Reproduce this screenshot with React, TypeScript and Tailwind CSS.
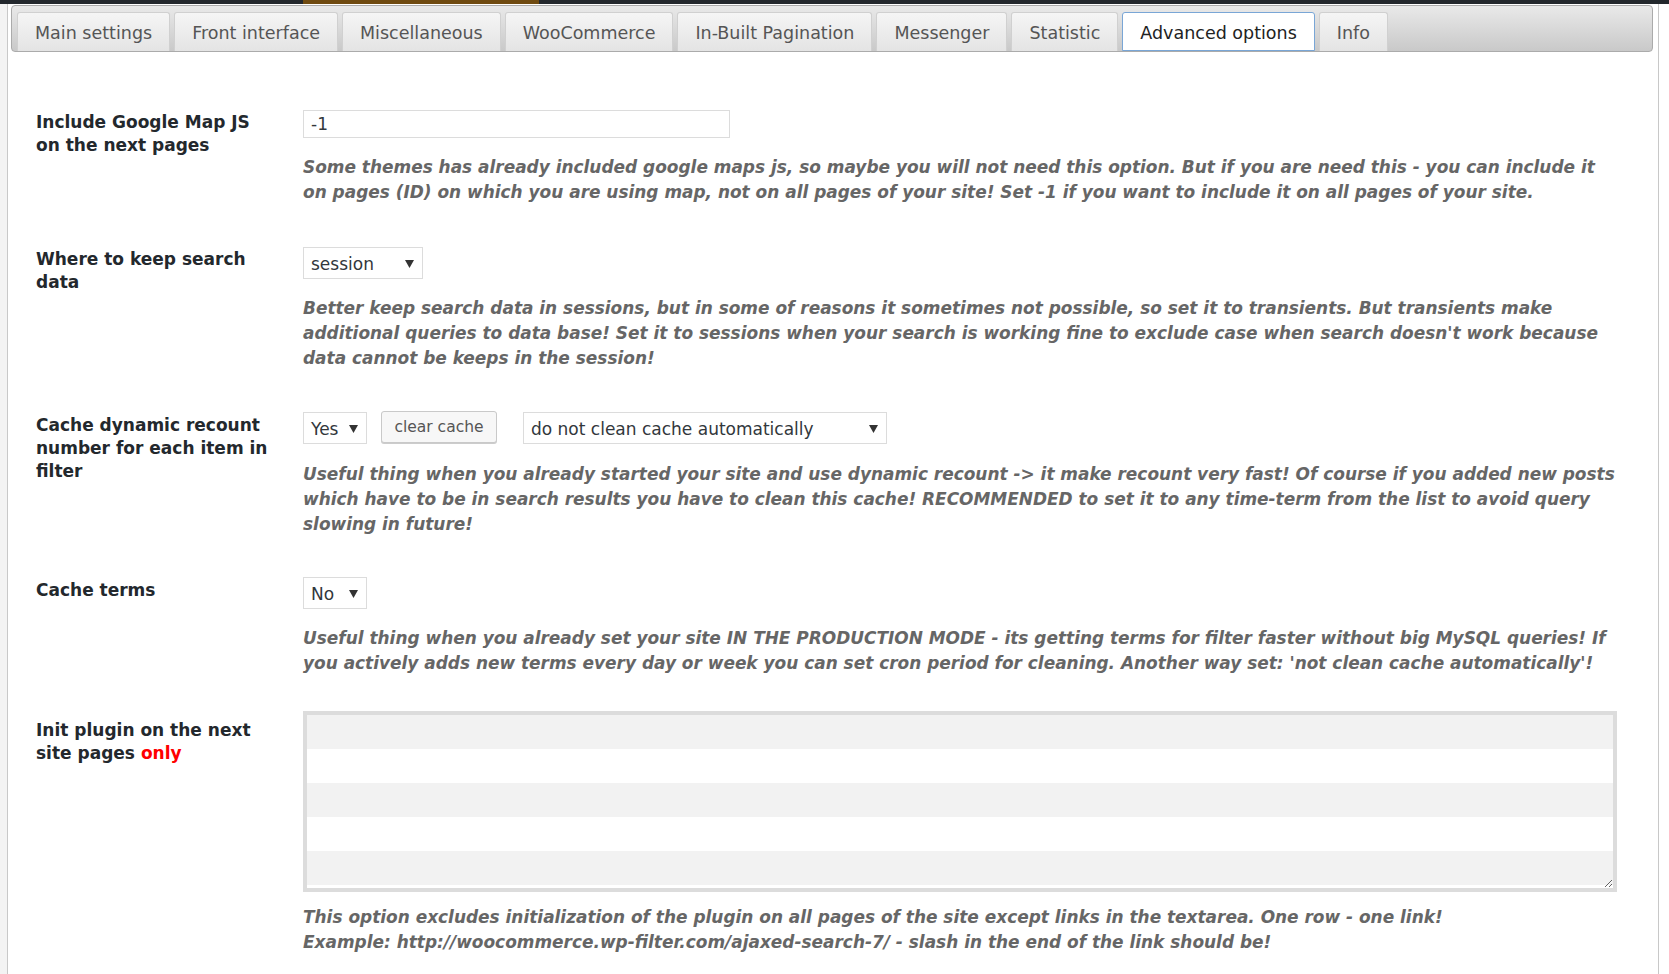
import React from "react";

const tabs = [
  "Main settings",
  "Front interface",
  "Miscellaneous",
  "WooCommerce",
  "In-Built Pagination",
  "Messenger",
  "Statistic",
  "Advanced options",
  "Info",
];

function Arrow() {
  return (
    <svg width="9" height="8" viewBox="0 0 9 8" className="shrink-0">
      <path d="M0 0 L9 0 L4.5 8 Z" fill="#333" />
    </svg>
  );
}

function FakeSelect({ value, w }: { value: string; w: string }) {
  return (
    <div
      className={`${w} h-[32px] border border-[#dcdcdc] bg-white flex items-center justify-between pl-[7px] pr-[8px] pt-[2px] text-[17px] text-[#32373c] shrink-0`}
    >
      <span className="leading-none">{value}</span>
      <Arrow />
    </div>
  );
}

function Desc({ lines, mt }: { lines: string[]; mt: string }) {
  return (
    <div className={`${mt} text-[16.95px] leading-[25px] font-bold italic text-[#666] whitespace-nowrap`}>
      {lines.map((l, i) => (
        <React.Fragment key={i}>
          {l}
          {i < lines.length - 1 && <br />}
        </React.Fragment>
      ))}
    </div>
  );
}

function Label({ children, pt = "pt-[2px]" }: { children: React.ReactNode; pt?: string }) {
  return (
    <div className={`w-[267px] shrink-0 pr-[27px] ${pt}`}>
      <div className="text-[17px] leading-[23px] font-bold text-[#23282d]">{children}</div>
    </div>
  );
}

export default function App() {
  return (
    <div className="min-h-screen bg-white font-['DejaVu_Sans',sans-serif]">
      <div className="flex h-[4px] bg-[#23282d]">
        <div className="w-[303px]" />
        <div className="w-[236px] bg-[#6f4a10]" />
      </div>
      <div className="flex min-h-[970px]">
        <div className="w-[7px] shrink-0 bg-[#f3f3f3]" />
        <div className="w-[1652px] shrink-0 border-l border-r border-[#c8c8c8] bg-white pt-px pl-[3px] pr-[5px]">
          {/* tab bar */}
          <div className="h-[47px] border border-[#ababab] rounded-[4px] bg-linear-to-b from-[#e9e9e9] to-[#c9c9c9] flex items-end pl-[5px] gap-[4px] overflow-hidden">
            {tabs.map((t) => {
              const active = t === "Advanced options";
              return (
                <div
                  key={t}
                  className={
                    active
                      ? "h-[39px] px-[17px] pt-[3px] flex items-center bg-white border border-[#79a6d6] rounded-t-[3px] text-[17.5px] text-[#222]"
                      : "h-[39px] px-[17px] pt-[3px] flex items-center border border-b-0 border-[#d0d0d0] rounded-t-[3px] bg-linear-to-b from-[#f5f5f5] to-[#e4e4e4] text-[17.5px] text-[#555]"
                  }
                >
                  {t}
                </div>
              );
            })}
          </div>

          {/* form */}
          <div className="pl-[25px] mt-[57px]">
            {/* row 1 */}
            <div className="flex">
              <Label>Include Google Map JS on the next pages</Label>
              <div className="flex-1">
                <div className="mt-px w-[427px] h-[28px] border border-[#dcdcdc] flex items-center pl-[7px] pt-[2px] text-[17px] text-[#32373c]">
                  -1
                </div>
                <Desc
                  mt="mt-[17px]"
                  lines={[
                    "Some themes has already included google maps js, so maybe you will not need this option. But if you are need this - you can include it",
                    "on pages (ID) on which you are using map, not on all pages of your site! Set -1 if you want to include it on all pages of your site.",
                  ]}
                />
              </div>
            </div>

            {/* row 2 */}
            <div className="flex mt-[42px]">
              <Label pt="pt-px">Where to keep search data</Label>
              <div className="flex-1">
                <FakeSelect value="session" w="w-[120px]" />
                <Desc
                  mt="mt-[17px]"
                  lines={[
                    "Better keep search data in sessions, but in some of reasons it sometimes not possible, so set it to transients. But transients make",
                    "additional queries to data base! Set it to sessions when your search is working fine to exclude case when search doesn't work because",
                    "data cannot be keeps in the session!",
                  ]}
                />
              </div>
            </div>

            {/* row 3 */}
            <div className="flex mt-[41px]">
              <Label>Cache dynamic recount number for each item in filter</Label>
              <div className="flex-1">
                <div className="flex items-start">
                  <FakeSelect value="Yes" w="w-[64px]" />
                  <div className="ml-[14px] -mt-px w-[116px] h-[32px] rounded-[3px] border border-[#c9c9c9] bg-[#f7f7f7] shadow-[0_1px_0_#cccccc] flex items-center justify-center pt-[2px] text-[15.5px] text-[#555]">
                    clear cache
                  </div>
                  <div className="ml-[26px]">
                    <FakeSelect value="do not clean cache automatically" w="w-[364px]" />
                  </div>
                </div>
                <Desc
                  mt="mt-[18px]"
                  lines={[
                    "Useful thing when you already started your site and use dynamic recount -> it make recount very fast! Of course if you added new posts",
                    "which have to be in search results you have to clean this cache! RECOMMENDED to set it to any time-term from the list to avoid query",
                    "slowing in future!",
                  ]}
                />
              </div>
            </div>

            {/* row 4 */}
            <div className="flex mt-[40px]">
              <Label>Cache terms</Label>
              <div className="flex-1">
                <FakeSelect value="No" w="w-[64px]" />
                <Desc
                  mt="mt-[17px]"
                  lines={[
                    "Useful thing when you already set your site IN THE PRODUCTION MODE - its getting terms for filter faster without big MySQL queries! If",
                    "you actively adds new terms every day or week you can set cron period for cleaning. Another way set: 'not clean cache automatically'!",
                  ]}
                />
              </div>
            </div>

            {/* row 5 */}
            <div className="flex mt-[35px]">
              <Label pt="pt-[8px]">
                Init plugin on the next site pages <span className="text-[#ff0000]">only</span>
              </Label>
              <div className="flex-1">
                <textarea
                  readOnly
                  className="block w-[1314px] h-[181px] border-4 border-[#dcdcdc] outline-none bg-[repeating-linear-gradient(180deg,#f2f2f2_0px,#f2f2f2_34px,#ffffff_34px,#ffffff_68px)]"
                />
                <Desc
                  mt="mt-[13px]"
                  lines={[
                    "This option excludes initialization of the plugin on all pages of the site except links in the textarea. One row - one link!",
                    "Example: http://woocommerce.wp-filter.com/ajaxed-search-7/ - slash in the end of the link should be!",
                  ]}
                />
              </div>
            </div>
          </div>
        </div>
      </div>
    </div>
  );
}
